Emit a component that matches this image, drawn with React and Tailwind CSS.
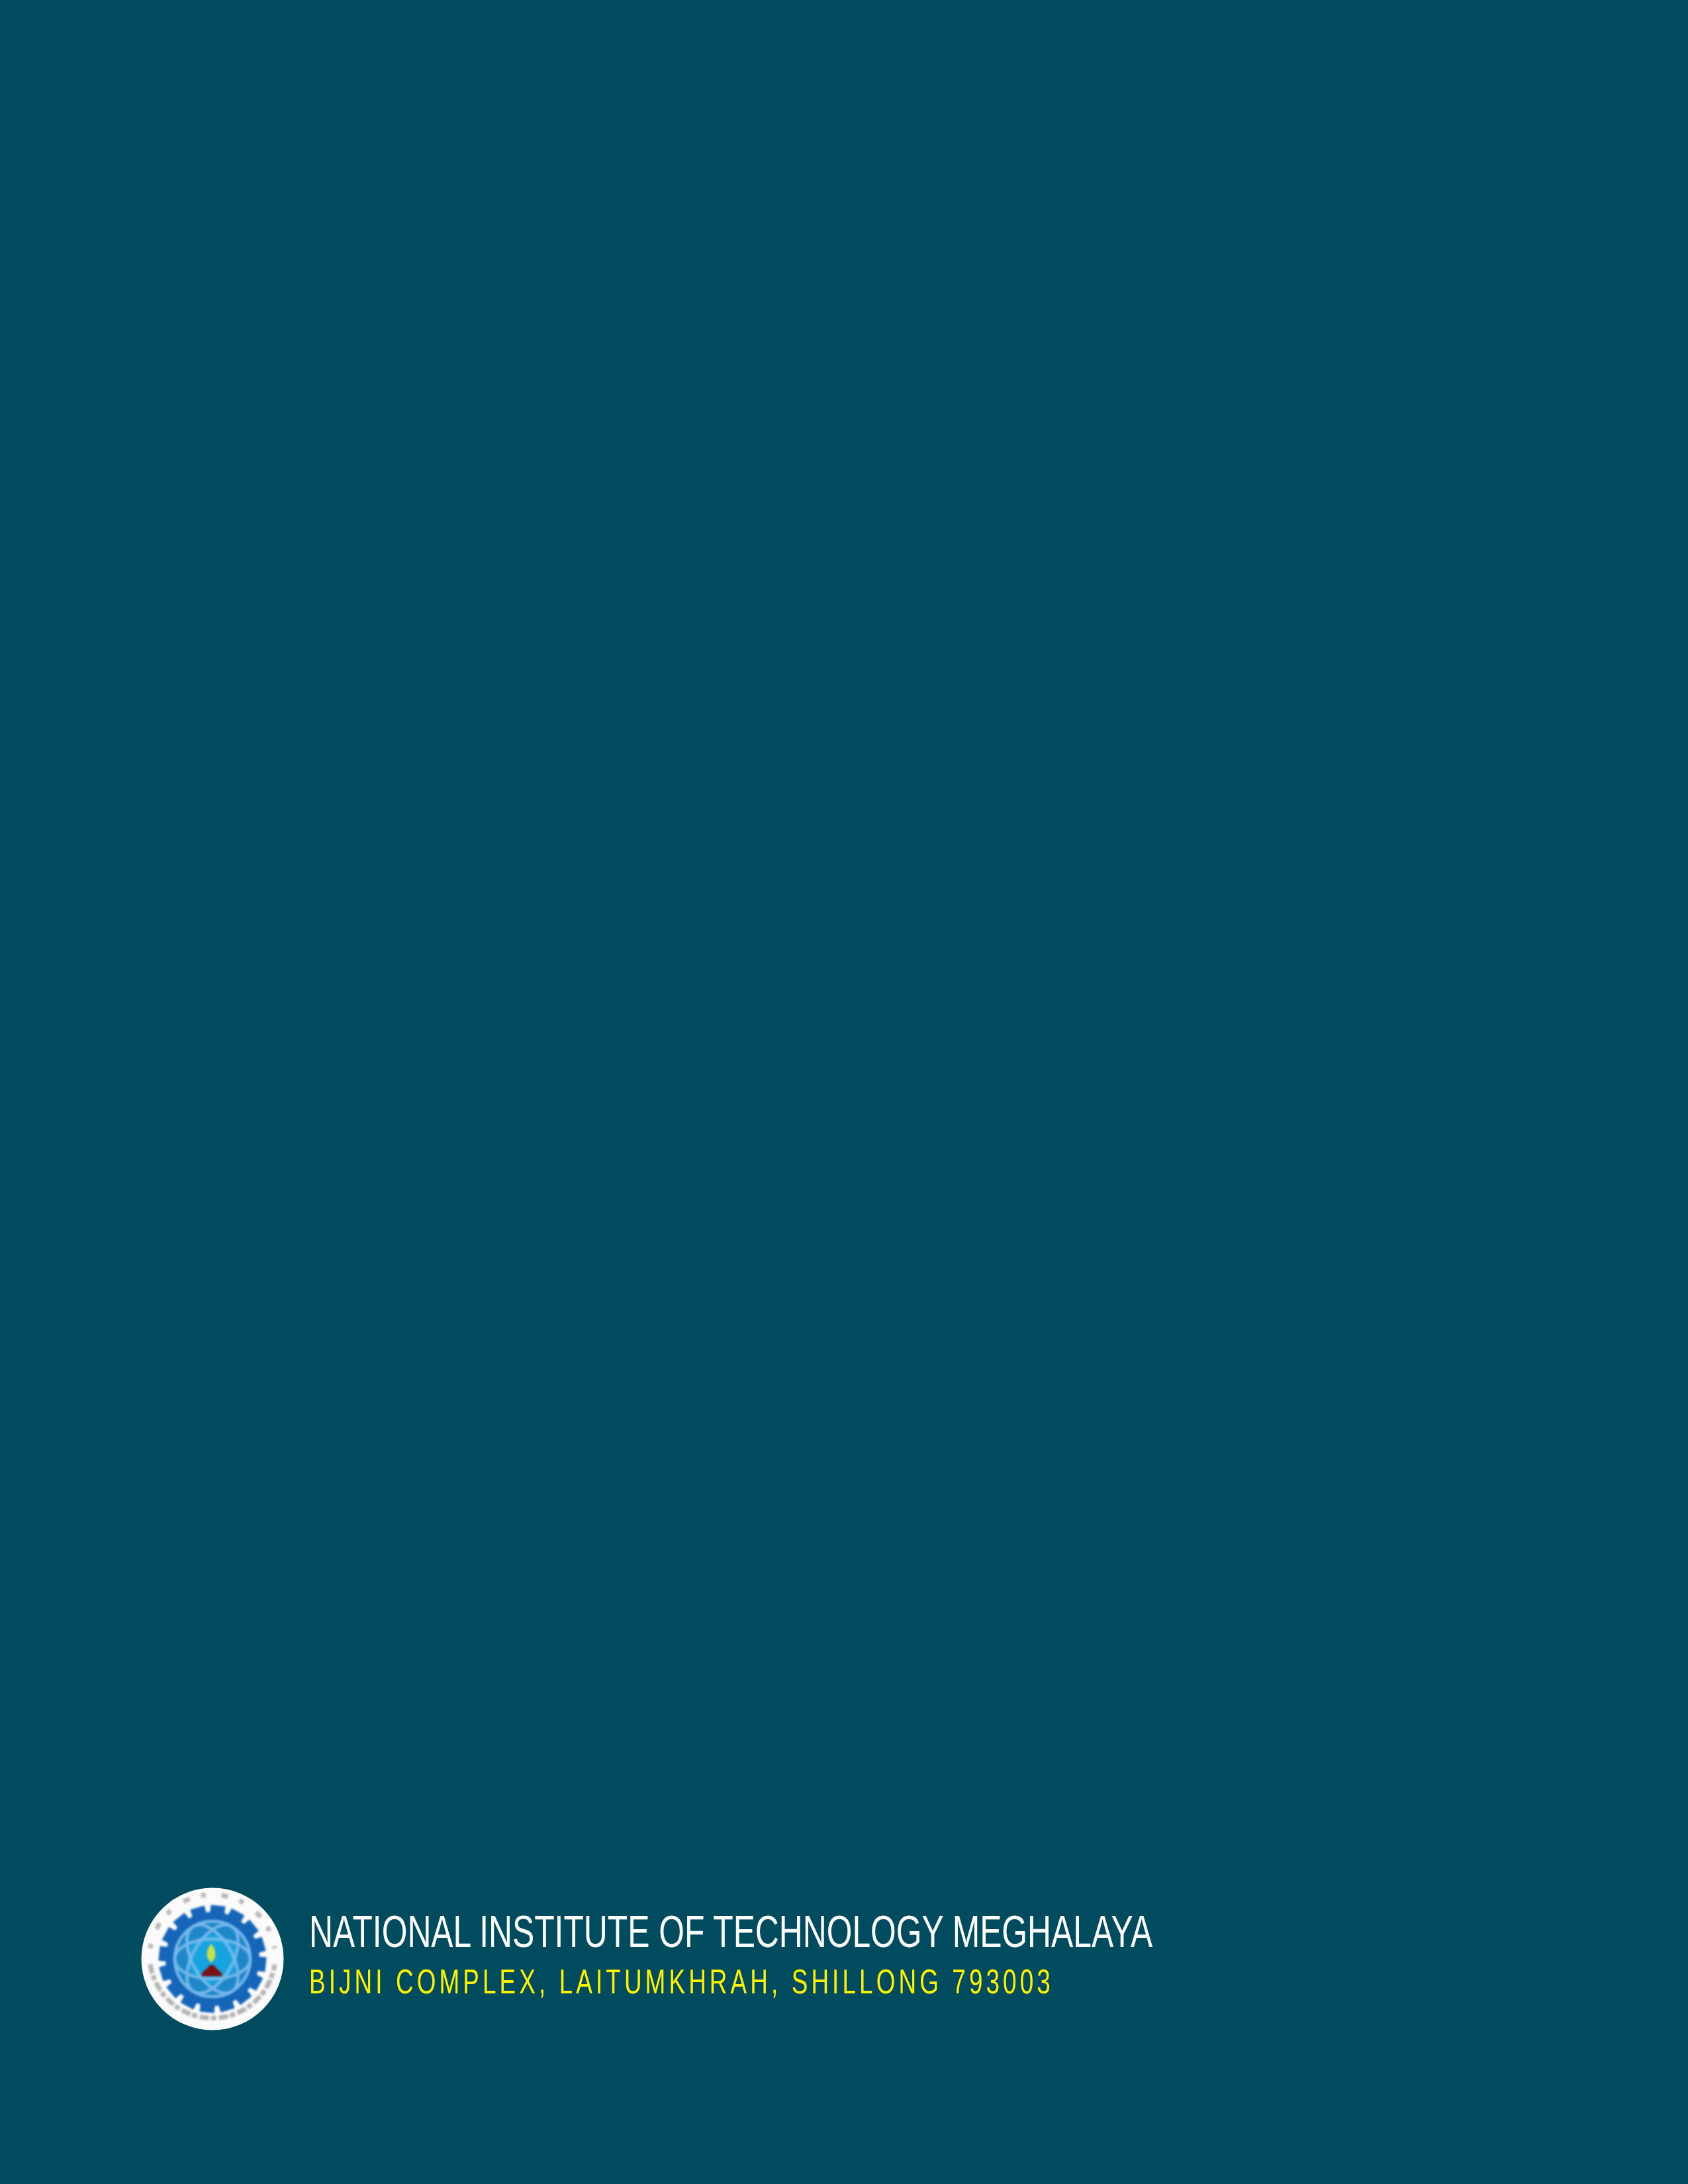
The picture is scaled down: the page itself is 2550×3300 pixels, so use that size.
const teeth = Array.from({ length: 16 }, (_, i) => i * 22.5);

function Logo() {
  return (
    <svg viewBox="0 0 216 216" className="w-[216px] h-[216px] shrink-0">
      <circle cx="108" cy="108" r="107.5" fill="#fbfbfb" />

      <g className="blur-[1.5px]">
        {/* ring lettering, too small to read in the source */}
        <path
          d="M 14 116 A 95 95 0 0 0 202 116"
          fill="none"
          stroke="#b4b4b4"
          strokeWidth="7"
          strokeDasharray="14 3 8 4"
        />
        <path
          d="M 14 92 A 95 95 0 0 1 202 92"
          fill="none"
          stroke="#b8b8b8"
          strokeWidth="7"
          strokeDasharray="7 24 10 18"
        />

        {/* gear */}
        {teeth.map((angle) => (
          <rect
            key={angle}
            x="97"
            y="27"
            width="22"
            height="24"
            fill="#1565b8"
            transform={`rotate(${angle + 6} 108 108)`}
          />
        ))}
        <circle cx="108" cy="108" r="71" fill="#1565b8" />
        <circle cx="108" cy="108" r="57" fill="#1f86c8" />
        <circle cx="108" cy="108" r="38" fill="#16a4e0" />

        {/* atom orbits */}
        <g fill="none" stroke="#74b8ec" strokeWidth="4.5">
          <ellipse cx="108" cy="108" rx="57" ry="30" />
          <ellipse cx="108" cy="108" rx="57" ry="30" transform="rotate(60 108 108)" />
          <ellipse cx="108" cy="108" rx="57" ry="30" transform="rotate(120 108 108)" />
          <circle cx="108" cy="108" r="57" />
        </g>
        <circle cx="108" cy="108" r="27" fill="#16a4e0" />

        {/* lamp */}
        <path d="M 106 85 C 97 96 98 108 106 113 C 114 108 115 96 106 85 Z" fill="#c8e24c" />
        <path d="M 107 117 C 112 117 113 122 116 124 C 119 126 122 128 123 134 L 91 134 C 92 128 95 126 98 124 C 101 122 102 117 107 117 Z" fill="#7a1010" />
      </g>
    </svg>
  );
}

export default function App() {
  return (
    <div className="min-h-[3300px] bg-[#014b5f] flex flex-col justify-end pl-[213px] pb-[232px]">
      <div className="flex items-center gap-[38px]">
        <Logo />
        <div className="font-['Liberation_Sans',Arial,sans-serif] mb-[15px]">
          <div className="text-[68px] leading-[72px] text-white whitespace-nowrap origin-left scale-x-[0.732]">
            NATIONAL INSTITUTE OF TECHNOLOGY MEGHALAYA
          </div>
          <div className="text-[51px] leading-[56px] mt-[13px] tracking-[7px] text-[#fff200] whitespace-nowrap origin-left scale-x-[0.724]">
            BIJNI COMPLEX, LAITUMKHRAH, SHILLONG 793003
          </div>
        </div>
      </div>
    </div>
  );
}
